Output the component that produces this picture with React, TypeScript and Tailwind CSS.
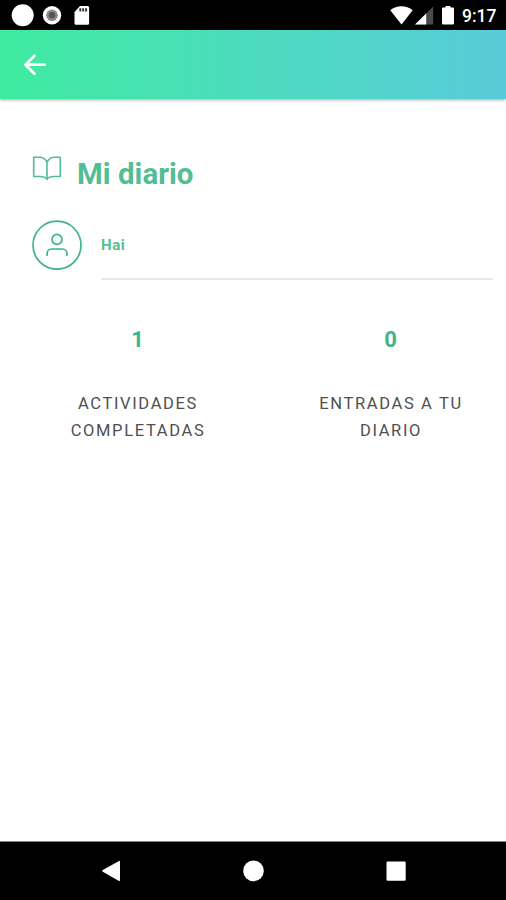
type Stat = {
  value: number;
  lines: string[];
};

const stats: Stat[] = [
  { value: 1, lines: ['ACTIVIDADES', 'COMPLETADAS'] },
  { value: 0, lines: ['ENTRADAS A TU', 'DIARIO'] },
];

function StatusBar() {
  return (
    <div className="flex h-[30px] items-center bg-black pl-[11px] pr-[9px] text-white">
      <svg width="23" height="30" viewBox="0 0 23 30" fill="currentColor">
        <circle cx="11.7" cy="15.2" r="11" />
      </svg>
      <svg width="20" height="30" viewBox="0 0 20 30" className="ml-2">
        <circle cx="10" cy="15.3" r="9.2" fill="#fff" />
        <circle cx="10" cy="15.3" r="5.8" fill="#8a8a8a" />
        <circle cx="10" cy="15.3" r="3.2" fill="#555" />
      </svg>
      <svg width="16" height="30" viewBox="0 0 16 30" className="ml-3">
        <path d="M6 6h7.5a1.6 1.6 0 0 1 1.6 1.6v15.6a1.6 1.6 0 0 1-1.6 1.6H2.1A1.6 1.6 0 0 1 .5 23.2V12z" fill="#fff" />
        <path d="M6.3 8.2v3.2M9.2 8.2v3.2M12.1 8.2v3.2" stroke="#333" strokeWidth="1.9" />
      </svg>

      <svg width="23" height="30" viewBox="0 0 23 30" fill="currentColor" className="ml-auto">
        <path d="M.3 10.2C6.5 4.9 16.500 4.900 22.700 10.200L11.500 24.500z" />
      </svg>
      <svg width="19" height="30" viewBox="0 0 19 30" className="ml-[2px]">
        <path d="M18.200 6.500v18H0z" fill="#4a4a4a" />
        <path d="M11.200 13.400v11.100H0z" fill="#fff" />
      </svg>
      <svg width="12" height="30" viewBox="0 0 12 30" fill="currentColor" className="ml-2">
        <path d="M3.500 6h5v1.500H11a1 1 0 0 1 1 1v15a1 1 0 0 1-1 1H1a1 1 0 0 1-1-1v-15a1 1 0 0 1 1-1h2.500z" />
      </svg>
      <span className="ml-2 w-[35px] whitespace-nowrap pt-[2px] text-[17.5px] font-medium leading-[28px]">9:17</span>
    </div>
  );
}

function Header() {
  return (
    <header className="flex h-[69px] items-center bg-gradient-to-r from-[#3feb9f] to-[#58cbd9] pl-[23px] shadow-[0_1px_3px_rgba(0,0,0,0.35)]">
      <button type="button" aria-label="Volver" className="text-white">
        <svg width="24" height="24" viewBox="0 0 24 24" fill="none" stroke="currentColor" strokeWidth="2.7" strokeLinecap="round" strokeLinejoin="round">
          <path d="M21.500 11.700H2.500M11.500 2.700L2.500 11.700l9 9" />
        </svg>
      </button>
    </header>
  );
}

function NavigationBar() {
  return (
    <nav className="flex h-[59px] items-center justify-between border-t border-[#888] bg-black pl-[102px] pr-[100px] text-white">
      <svg width="19" height="22" viewBox="0 0 19 22" fill="currentColor">
        <path d="M17 .9a.8.8 0 0 1 1 .8v18.400a.8.8 0 0 1-1 .8L.8 11.700a1 1 0 0 1 0-1.600z" />
      </svg>
      <svg width="22" height="22" viewBox="0 0 22 22" fill="currentColor">
        <circle cx="10.5" cy="10.9" r="10.3" />
      </svg>
      <svg width="20" height="22" viewBox="0 0 20 22" fill="currentColor">
        <rect x="0.5" y="1.5" width="19.2" height="19.2" rx="1.2" />
      </svg>
    </nav>
  );
}

export default function App() {
  return (
    <div className="flex h-[900px] w-[506px] flex-col overflow-hidden bg-white font-['Roboto',sans-serif]">
      <StatusBar />
      <Header />

      <main className="flex-1 pt-[55px]">
        <div className="flex h-[38px] pl-8 text-[#53bd93]">
          <svg width="30" height="28" viewBox="0 0 30 28" fill="none" stroke="currentColor" strokeWidth="1.6" strokeLinejoin="round">
            <path d="M15 8v17.300M15 8C13.500 5.200 11 3.300 7.500 3.300H1.700v19.200h6.500c3 0 5.500.8 6.800 2.800 1.300-2 3.800-2.800 6.800-2.800h6.500V3.300h-5.800C19 3.300 16.500 5.200 15 8z" />
          </svg>
          <h1 className="ml-[15px] pt-[3px] text-[29.5px] font-bold leading-[34px]">Mi diario</h1>
        </div>

        <div className="mt-[28px] flex pl-8 pr-[13px] text-[#53bd93]">
          <svg width="50" height="50" viewBox="0 0 50 50" fill="none" stroke="#3fb487" strokeWidth="1.7">
            <circle cx="25" cy="25.2" r="24" />
            <circle cx="25" cy="19.4" r="5" />
            <path d="M15.100 36v-2.500a4.500 4.500 0 0 1 4.500-4.500h10.800a4.500 4.500 0 0 1 4.500 4.500V36" />
          </svg>
          <div className="ml-[19px] h-[60px] flex-1 border-b-2 border-[#e8e8e8] pt-[15px] text-[15px] font-bold leading-5 tracking-[0.6px]">
            Hai
          </div>
        </div>

        <div className="mt-[46px] grid grid-cols-[253px_253px] pl-[11px]">
          {stats.map((stat) => (
            <div key={stat.value} className="text-center">
              <p className="text-[22px] font-bold leading-[28px] text-[#3fb487]">{stat.value}</p>
              <p className="mt-[36px] pl-[1px] text-[16.5px] leading-[27px] tracking-[1.65px] text-[#505050]">
                {stat.lines.map((line) => (
                  <span key={line} className="block">
                    {line}
                  </span>
                ))}
              </p>
            </div>
          ))}
        </div>
      </main>

      <NavigationBar />
    </div>
  );
}
